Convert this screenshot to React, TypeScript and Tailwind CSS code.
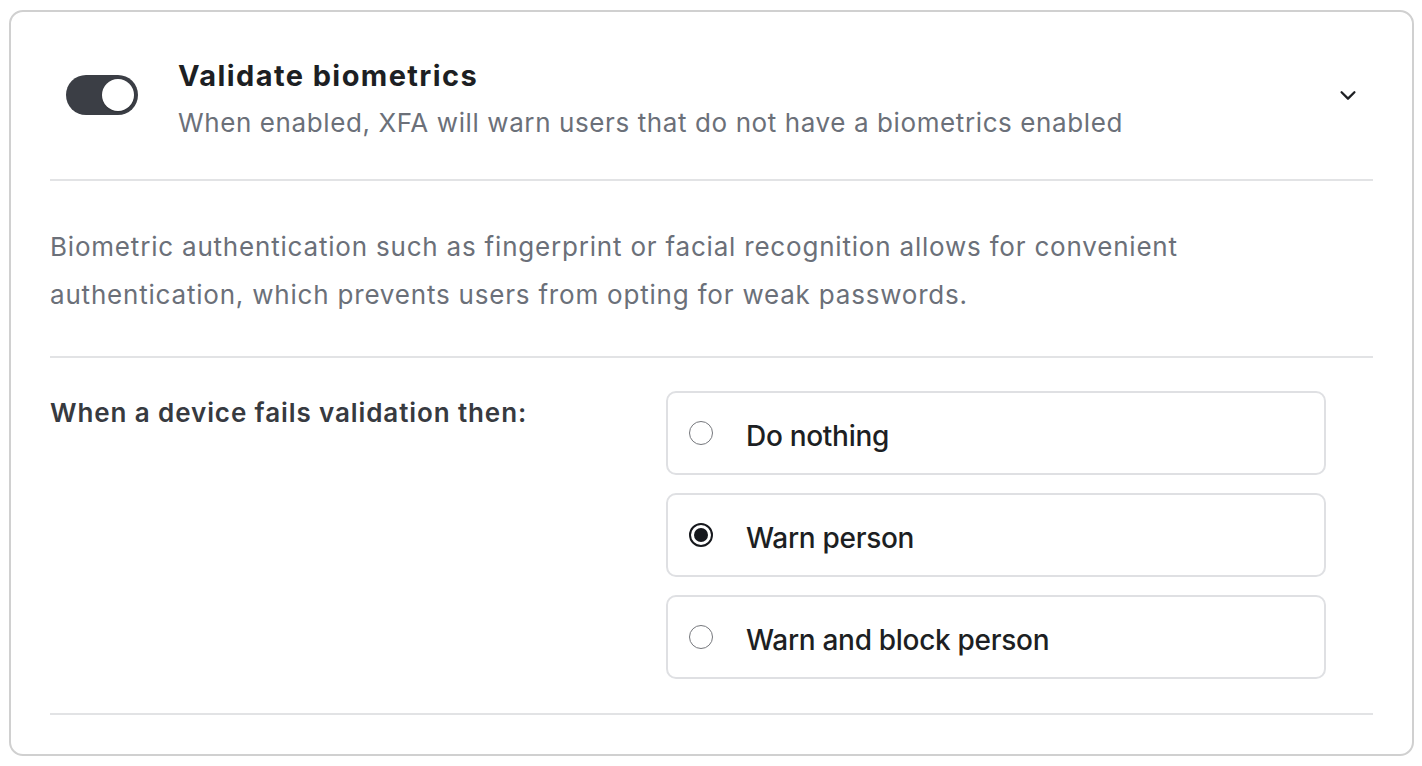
import { useState } from 'react';

const options = [
  { id: 'nothing', label: 'Do nothing' },
  { id: 'warn', label: 'Warn person' },
  { id: 'block', label: 'Warn and block person' },
];

function Toggle({ on, onChange }: { on: boolean; onChange: (v: boolean) => void }) {
  return (
    <button
      type="button"
      role="switch"
      aria-checked={on}
      onClick={() => onChange(!on)}
      className={`mt-[19px] flex h-[40px] w-[72px] shrink-0 items-center rounded-full px-[4px] ${
        on ? 'justify-end bg-[#3b3e45]' : 'justify-start bg-[#d4d6da]'
      }`}
    >
      <span className="h-[32px] w-[32px] rounded-full bg-white shadow-[0_1px_2px_rgba(0,0,0,0.25)]" />
    </button>
  );
}

function Radio({ checked }: { checked: boolean }) {
  return checked ? (
    <span className="flex h-[24px] w-[24px] shrink-0 items-center justify-center rounded-full border-[2px] border-[#16181d]">
      <span className="h-[14px] w-[14px] rounded-full bg-[#16181d]" />
    </span>
  ) : (
    <span className="h-[24px] w-[24px] shrink-0 rounded-full border-[1.5px] border-[#75777c]" />
  );
}

export default function App() {
  const [enabled, setEnabled] = useState(true);
  const [choice, setChoice] = useState('warn');

  return (
    <div className="min-h-screen bg-white pl-[9px] pt-[10px] font-['Inter',sans-serif]">
      <div className="w-[1405px] rounded-[14px] border-[2px] border-[#d0d0d0] px-[39px] pb-[39px]">
        <div className="flex h-[167px] items-start pl-[16px] pr-[14px] pt-[44px]">
          <Toggle on={enabled} onChange={setEnabled} />
          <div className="ml-[40px] flex-1">
            <h2 className="text-[29px] font-bold leading-[40px] tracking-[1.4px] text-[#1d1f23]">
              Validate biometrics
            </h2>
            <p className="mt-[7px] text-[26px] leading-[40px] tracking-[0.6px] text-[#6b7079]">
              When enabled, XFA will warn users that do not have a biometrics enabled
            </p>
          </div>
          <svg
            className="mt-[28px]"
            width="22"
            height="22"
            viewBox="0 0 24 24"
            fill="none"
            stroke="#1d1f23"
            strokeWidth="2.5"
            strokeLinecap="round"
            strokeLinejoin="round"
          >
            <polyline points="5 9 12 16 19 9" />
          </svg>
        </div>

        <div className="border-t-[2px] border-[#e2e3e5] pb-[37px] pt-[42px]">
          <p className="text-[26px] leading-[48px] tracking-[0.8px] text-[#6b7079]">
            Biometric authentication such as fingerprint or facial recognition allows for convenient
            authentication, which prevents users from opting for weak passwords.
          </p>
        </div>

        <div className="flex border-t-[2px] border-b-[2px] border-[#e2e3e5] pb-[34px] pt-[33px]">
          <div className="w-[616px] pt-[5px] text-[26px] font-semibold leading-[34px] tracking-[0.9px] text-[#373a40]">
            When a device fails validation then:
          </div>
          <div className="flex w-[660px] flex-col gap-[18px]">
            {options.map((o) => (
              <button
                key={o.id}
                type="button"
                onClick={() => setChoice(o.id)}
                className="flex h-[84px] items-center rounded-[10px] border-[2px] border-[#dfe0e3] pl-[21px] text-left"
              >
                <Radio checked={choice === o.id} />
                <span className="ml-[33px] mt-[6px] text-[28px] font-medium leading-[36px] tracking-[-0.3px] text-[#1d1f23]">
                  {o.label}
                </span>
              </button>
            ))}
          </div>
        </div>
      </div>
    </div>
  );
}
